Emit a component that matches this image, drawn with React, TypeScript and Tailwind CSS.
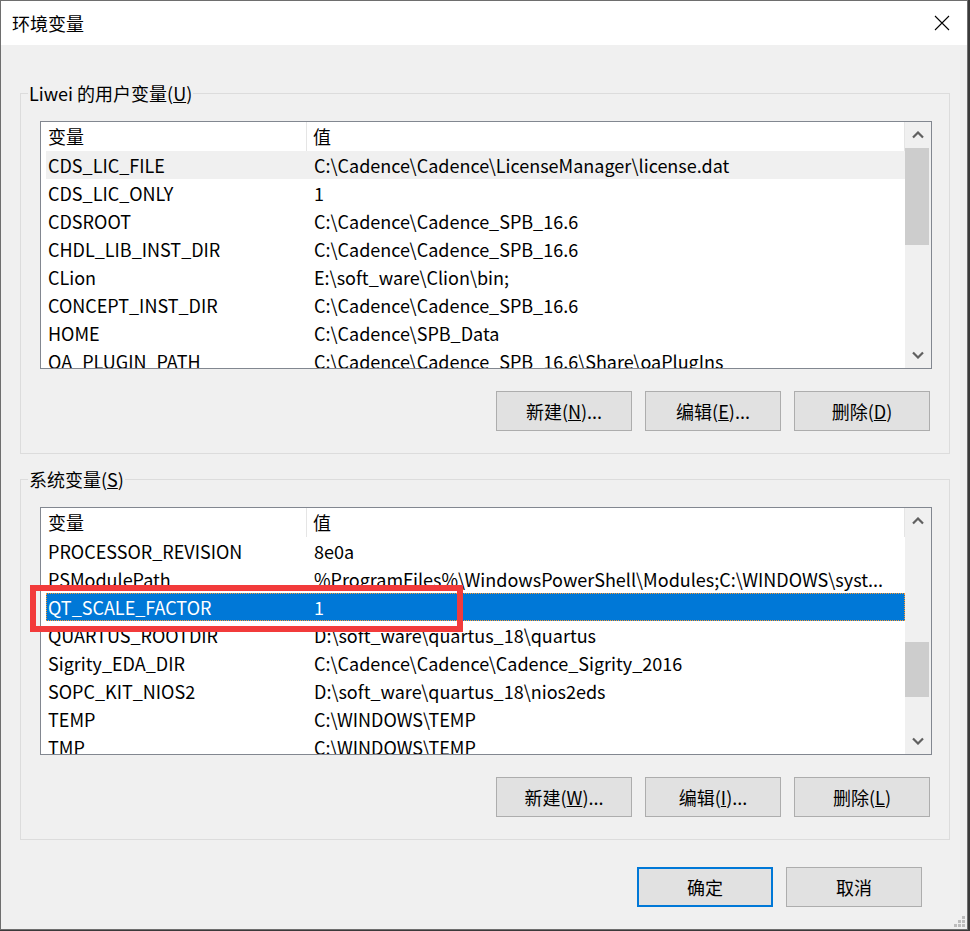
import type { ReactNode } from "react";

const font = { fontFamily: '"Noto Sans CJK SC", "Microsoft YaHei", sans-serif' };

type Row = [string, string];

const userVars: Row[] = [
  ["CDS_LIC_FILE", "C:\\Cadence\\Cadence\\LicenseManager\\license.dat"],
  ["CDS_LIC_ONLY", "1"],
  ["CDSROOT", "C:\\Cadence\\Cadence_SPB_16.6"],
  ["CHDL_LIB_INST_DIR", "C:\\Cadence\\Cadence_SPB_16.6"],
  ["CLion", "E:\\soft_ware\\Clion\\bin;"],
  ["CONCEPT_INST_DIR", "C:\\Cadence\\Cadence_SPB_16.6"],
  ["HOME", "C:\\Cadence\\SPB_Data"],
  ["OA_PLUGIN_PATH", "C:\\Cadence\\Cadence_SPB_16.6\\Share\\oaPlugIns"],
];

const sysVars: Row[] = [
  ["PROCESSOR_REVISION", "8e0a"],
  ["PSModulePath", "%ProgramFiles%\\WindowsPowerShell\\Modules;C:\\WINDOWS\\syst..."],
  ["QT_SCALE_FACTOR", "1"],
  ["QUARTUS_ROOTDIR", "D:\\soft_ware\\quartus_18\\quartus"],
  ["Sigrity_EDA_DIR", "C:\\Cadence\\Cadence\\Cadence_Sigrity_2016"],
  ["SOPC_KIT_NIOS2", "D:\\soft_ware\\quartus_18\\nios2eds"],
  ["TEMP", "C:\\WINDOWS\\TEMP"],
  ["TMP", "C:\\WINDOWS\\TEMP"],
];

function Chevron({ down }: { down?: boolean }) {
  return (
    <svg width="12" height="8" viewBox="0 0 12 8">
      <polyline
        points={down ? "1,1.5 6,6.5 11,1.5" : "1,6.5 6,1.5 11,6.5"}
        fill="none"
        stroke="#606060"
        strokeWidth="2.2"
      />
    </svg>
  );
}

function Btn({ children, primary }: { children: ReactNode; primary?: boolean }) {
  return (
    <button
      type="button"
      className={
        primary
          ? "w-[136px] h-[40px] bg-[#e1e1e1] border-2 border-[#0078d7] text-[18px] text-black"
          : "w-[136px] h-[40px] bg-[#e1e1e1] border border-[#adadad] text-[18px] text-black"
      }
    >
      {children}
    </button>
  );
}

function VarList({
  rows,
  hover,
  selected,
  thumbTop,
  thumbHeight,
}: {
  rows: Row[];
  hover?: number;
  selected?: number;
  thumbTop: number;
  thumbHeight: number;
}) {
  return (
    <div className="w-[892px] h-[248px] border border-[#828790] bg-white flex">
      <div className="flex-1 flex flex-col overflow-hidden">
        <div className="h-[29px] shrink-0 flex items-center pl-[5px] text-[18px] text-black">
          <div className="w-[261px] h-full flex items-center pl-[2px] border-r border-[#e5e5e5]">变量</div>
          <div className="flex-1 h-full flex items-center pl-[6px] border-r border-[#e5e5e5]">值</div>
        </div>
        {rows.map(([k, v], i) => {
          const sel = i === selected;
          const hov = i === hover;
          return (
            <div key={k} className="shrink-0 pl-[5px]">
              <div
                className={
                  sel
                    ? "h-[28px] flex items-center bg-[#0078d7] text-white border border-dotted border-[#ff9a2e] whitespace-nowrap"
                    : hov
                      ? "h-[28px] flex items-center bg-[#f0f0f0] text-black border border-transparent whitespace-nowrap"
                      : "h-[28px] flex items-center text-black border border-transparent whitespace-nowrap"
                }
              >
                <div className="w-[260px] shrink-0 pl-[1px] text-[18px] overflow-hidden">{k}</div>
                <div className="flex-1 pl-[7px] text-[18px] overflow-hidden">{v}</div>
              </div>
            </div>
          );
        })}
      </div>
      <div className="w-[26px] bg-[#f0f0f0] flex flex-col">
        <div className="h-[26px] shrink-0 flex items-center justify-center">
          <Chevron />
        </div>
        <div className="flex-1 flex flex-col">
          <div className="w-[24px] bg-[#cdcdcd]" style={{ marginTop: thumbTop, height: thumbHeight }} />
        </div>
        <div className="h-[26px] shrink-0 flex items-center justify-center">
          <Chevron down />
        </div>
      </div>
    </div>
  );
}

function Group({ title, children }: { title: ReactNode; children: ReactNode }) {
  return (
    <fieldset className="w-[930px] border border-[#dcdcdc]">
      <legend className="ml-[7px] px-[1px] text-[18px] leading-[24px] text-black">{title}</legend>
      <div className="pl-[19px] pr-[17px] pt-[16px] pb-[22px]">{children}</div>
    </fieldset>
  );
}

export default function App() {
  return (
    <div className="w-[970px] h-[931px] bg-[#3a3a3a]" style={font}>
      <div className="w-[968px] h-[930px] bg-[#f0f0f0] border border-[#6e6e6e] flex flex-col relative">
        <div className="h-[44px] shrink-0 bg-white flex items-center justify-between pl-[11px] pr-[17px]">
          <span className="text-[18px] text-black">环境变量</span>
          <svg width="16" height="16" viewBox="0 0 16 16">
            <path d="M1 1 L15 15 M15 1 L1 15" stroke="#000" strokeWidth="1.1" />
          </svg>
        </div>

        <div className="pl-[19px] pt-[36px] flex flex-col">
          <Group
            title={
              <>
                Liwei 的用户变量(<span className="underline">U</span>)
              </>
            }
          >
            <VarList rows={userVars} hover={0} thumbTop={0} thumbHeight={97} />
            <div className="flex justify-end gap-[13px] pr-[2px] mt-[22px]">
              <Btn>
                新建(<span className="underline">N</span>)...
              </Btn>
              <Btn>
                编辑(<span className="underline">E</span>)...
              </Btn>
              <Btn>
                删除(<span className="underline">D</span>)
              </Btn>
            </div>
          </Group>

          <div className="mt-[13px]">
            <Group
              title={
                <>
                  系统变量(<span className="underline">S</span>)
                </>
              }
            >
              <VarList rows={sysVars} selected={2} thumbTop={108} thumbHeight={55} />
              <div className="flex justify-end gap-[13px] pr-[2px] mt-[22px]">
                <Btn>
                  新建(<span className="underline">W</span>)...
                </Btn>
                <Btn>
                  编辑(<span className="underline">I</span>)...
                </Btn>
                <Btn>
                  删除(<span className="underline">L</span>)
                </Btn>
              </div>
            </Group>
          </div>

          <div className="flex justify-end gap-[13px] pr-[45px] mt-[27px]">
            <Btn primary>确定</Btn>
            <Btn>取消</Btn>
          </div>
        </div>

        <svg className="absolute right-[1px] bottom-[1px]" width="13" height="13" viewBox="0 0 13 13">
          <rect x="9" y="1" width="3" height="3" fill="#bdbdbd" />
          <rect x="5" y="5" width="3" height="3" fill="#bdbdbd" />
          <rect x="9" y="5" width="3" height="3" fill="#bdbdbd" />
          <rect x="1" y="9" width="3" height="3" fill="#bdbdbd" />
          <rect x="5" y="9" width="3" height="3" fill="#bdbdbd" />
          <rect x="9" y="9" width="3" height="3" fill="#bdbdbd" />
        </svg>

        <div className="absolute left-[29px] top-[584px] w-[433px] h-[47px] border-[6px] border-[#f23b3b]" />
      </div>
    </div>
  );
}
